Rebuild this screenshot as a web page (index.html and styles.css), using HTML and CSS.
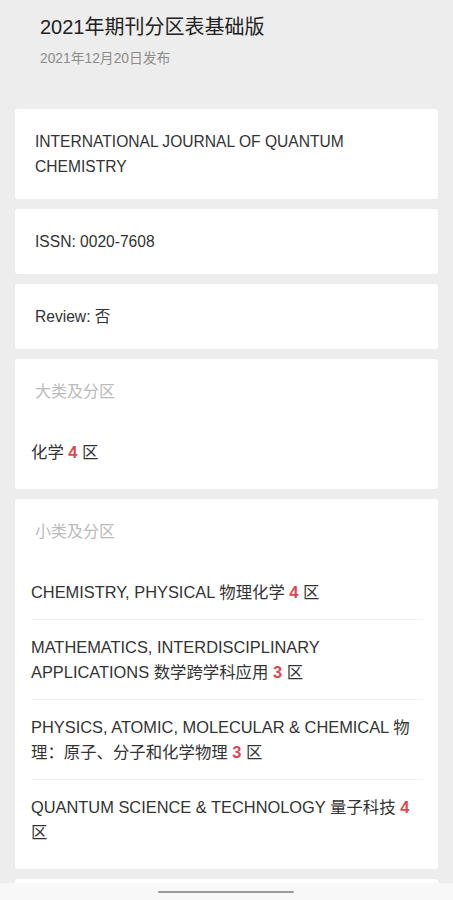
FILE: index.html
```html
<!DOCTYPE html>
<html lang="zh-CN">
<head>
<meta charset="utf-8">
<title>2021年期刊分区表基础版</title>
<link rel="stylesheet" href="styles.css">
</head>
<body>
<div class="page">
  <header class="header">
    <h1 class="title">2021年期刊分区表基础版</h1>
    <div class="date">2021年12月20日发布</div>
  </header>

  <section class="card simple">INTERNATIONAL JOURNAL OF QUANTUM CHEMISTRY</section>
  <section class="card simple">ISSN: 0020-7608</section>
  <section class="card simple">Review: 否</section>

  <section class="card group">
    <div class="label">大类及分区</div>
    <div class="item last">化学 <span class="zone">4</span> 区</div>
  </section>

  <section class="card group">
    <div class="label">小类及分区</div>
    <div class="item">CHEMISTRY, PHYSICAL 物理化学 <span class="zone">4</span> 区</div>
    <div class="item">MATHEMATICS, INTERDISCIPLINARY APPLICATIONS 数学跨学科应用 <span class="zone">3</span> 区</div>
    <div class="item">PHYSICS, ATOMIC, MOLECULAR &amp; CHEMICAL 物理：原子、分子和化学物理 <span class="zone">3</span> 区</div>
    <div class="item last">QUANTUM SCIENCE &amp; TECHNOLOGY 量子科技 <span class="zone">4</span> 区</div>
  </section>

  <section class="card simple">&nbsp;</section>
</div>
<div class="navbar"><div class="home-indicator"></div></div>
</body>
</html>
```

FILE: styles.css
```css
html, body {
  margin: 0;
  padding: 0;
  background: #ededed;
}
body {
  font-family: "Liberation Sans", "Noto Sans CJK SC", sans-serif;
  color: #333333;
  width: 453px;
  height: 900px;
  overflow: hidden;
}
.page {
  display: flex;
  flex-direction: column;
  gap: 10px;
  padding: 0 15px;
}
.header {
  padding: 12px 25px 30px;
}
.title {
  margin: 0;
  font-size: 20px;
  font-weight: normal;
  line-height: 30px;
  color: #222222;
}
.date {
  margin-top: 7px;
  font-size: 13.8px;
  line-height: 20px;
  color: #8c8c8c;
}
.card {
  background: #ffffff;
  border-radius: 3px;
  font-size: 16.4px;
  line-height: 25px;
}
.simple {
  padding: 20px 20px;
  font-size: 15.6px;
}
.group {
  padding: 20px 15px 9px 16px;
}
.label {
  padding-left: 4px;
  color: #bbbbbb;
  font-size: 16px;
  margin-bottom: 21px;
}
.item {
  padding: 15px 0 14px;
  border-bottom: 1px solid #f1f1f1;
}
.item.last {
  border-bottom: none;
  padding-bottom: 15px;
}
.zone {
  color: #dc4750;
  font-weight: bold;
}
.navbar {
  position: fixed;
  left: 0;
  right: 0;
  bottom: 0;
  height: 17px;
  background: #f8f8f8;
}
.home-indicator {
  position: absolute;
  left: 158px;
  width: 136px;
  top: 8px;
  height: 2px;
  border-radius: 1px;
  background: #9a9a9a;
}
```
